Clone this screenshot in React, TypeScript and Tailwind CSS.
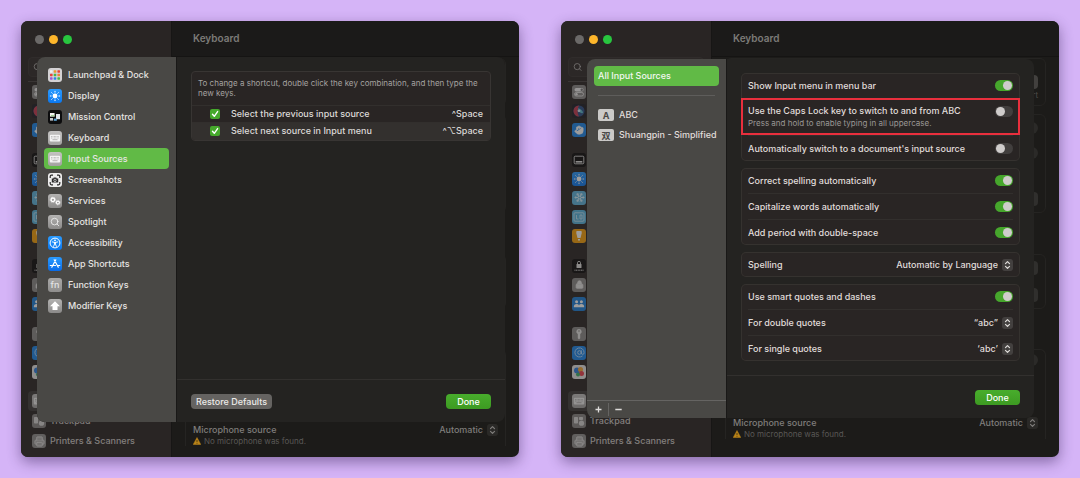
import React, { useState } from "react";
import {
    AtSign,
    Hand,
    Lock,
    Printer,
    Search,
    Snowflake,
} from "lucide-react";

type IconProps = { name: string };

const tiles: Record<string, string> = {
    launchpad: "bg-[#d4d2d4]",
    display: "bg-gradient-to-b from-[#2a9bff] to-[#0a78f0]",
    mission: "bg-[#0c0c0d]",
    keyboard: "bg-gradient-to-b from-[#c4c3c2] to-[#a3a2a1]",
    screenshots: "bg-[#ececec]",
    services: "bg-gradient-to-b from-[#b4b3b2] to-[#8b8a89]",
    spotlight: "bg-gradient-to-b from-[#b4b3b2] to-[#8b8a89]",
    accessibility: "bg-gradient-to-b from-[#2a9bff] to-[#0a78f0]",
    appstore: "bg-gradient-to-b from-[#2a9bff] to-[#0a6be8]",
    fn: "bg-gradient-to-b from-[#a9a8a7] to-[#8f8e8d]",
    modifier: "bg-gradient-to-b from-[#b4b3b2] to-[#8b8a89]",
    control: "bg-[#8b8a89]",
    siri: "bg-[#1e1e26]",
    hand: "bg-[#1c86ea]",
    dock: "bg-[#0c0c0d]",
    wallpaper: "bg-[#5cb4dd]",
    saver: "bg-[#55b3dc]",
    bulb: "bg-[#f3a00c]",
    lockscreen: "bg-[#0c0c0d]",
    privacy: "bg-[#8b8a89]",
    users: "bg-[#1c7fd9]",
    key: "bg-[#8b8a89]",
    at: "bg-[#1c86ea]",
    games: "bg-[#e4e4e4]",
    trackpad: "bg-[#8f8e8d]",
    printer: "bg-[#9a9998]",
};

const Glyph = ({ name }: IconProps) => {
    switch (name) {
        case "launchpad":
            return (
                <svg viewBox="0 0 14 14" className="size-[14px]">
                    <rect x="2" y="2.3" width="2.6" height="2.4" rx=".6" fill="#f2f2f2" />
                    <rect x="5.7" y="2.3" width="2.6" height="2.4" rx=".6" fill="#f39a2b" />
                    <rect x="9.4" y="2.3" width="2.6" height="2.4" rx=".6" fill="#e8453c" />
                    <rect x="2" y="5.8" width="2.6" height="2.4" rx=".6" fill="#e8453c" />
                    <rect x="5.7" y="5.8" width="2.6" height="2.4" rx=".6" fill="#46b84a" />
                    <rect x="9.4" y="5.8" width="2.6" height="2.4" rx=".6" fill="#f2803a" />
                    <rect x="2" y="9.3" width="2.6" height="2.4" rx=".6" fill="#a356d6" />
                    <rect x="5.7" y="9.3" width="2.6" height="2.4" rx=".6" fill="#2f86e8" />
                    <rect x="9.4" y="9.3" width="2.6" height="2.4" rx=".6" fill="#46b84a" />
                </svg>
            );
        case "display":
            return (
                <svg viewBox="0 0 14 14" className="size-[14px]" stroke="#fff" strokeWidth="1" strokeLinecap="round">
                    <circle cx="7" cy="7" r="2.4" fill="#fff" stroke="none" />
                    <path d="M7 2.3v.8M7 10.900v.8M2.300 7h.8M10.900 7h.8M3.700 3.700l.5.5M9.800 9.800l.5.5M3.700 10.300l.5-.5M9.800 4.200l.5-.5" />
                </svg>
            );
        case "mission":
            return (
                <svg viewBox="0 0 14 14" className="size-[14px]">
                    <rect x="2" y="3" width="4.6" height="3.6" fill="#f1f1f1" />
                    <rect x="8" y="4" width="4" height="5.2" fill="#dfe4ea" />
                    <rect x="2" y="8" width="3" height="2.6" fill="#c8ccd0" />
                    <rect x="5.8" y="8.6" width="3" height="2.2" fill="#5fa7d8" />
                    <rect x="3" y="5.2" width="3.6" height="1" fill="#8fca7d" />
                </svg>
            );
        case "screenshots":
            return (
                <svg viewBox="0 0 14 14" className="size-[14px]" fill="none" stroke="#2b2b2b" strokeWidth="1.2">
                    <path d="M2.2 5V3.4q0-1.2 1.2-1.2H5M9 2.2h1.6q1.2 0 1.2 1.2V5M11.8 9v1.6q0 1.2-1.2 1.2H9M5 11.8H3.4q-1.2 0-1.2-1.2V9" />
                    <path d="M3.8 5.5h1.4l.6-1h2.4l.6 1h1.4v4H3.8z" fill="#2b2b2b" stroke="none" />
                    <circle cx="7" cy="7.4" r="1.2" stroke="#ececec" strokeWidth=".7" />
                </svg>
            );
        case "services":
            return (
                <svg viewBox="0 0 14 14" className="size-[14px]" fill="none" stroke="#fff">
                    <circle cx="4.9" cy="5.8" r="1.8" strokeWidth="1.3" />
                    <circle cx="4.9" cy="5.8" r="2.7" strokeWidth=".7" strokeDasharray=".8 .9" />
                    <circle cx="9.9" cy="8.6" r="1.5" strokeWidth="1.2" />
                    <circle cx="9.9" cy="8.6" r="2.3" strokeWidth=".7" strokeDasharray=".8 .8" />
                </svg>
            );
        case "spotlight":
            return <Search size={10} color="#f0f0f0" strokeWidth={2} />;
        case "accessibility":
            return (
                <svg viewBox="0 0 14 14" className="size-[14px]" fill="none" stroke="#fff">
                    <circle cx="7" cy="7" r="4.9" strokeWidth="1" />
                    <circle cx="7" cy="4.3" r=".9" fill="#fff" stroke="none" />
                    <path d="M4.3 5.9l2 .5h1.4l2-.5M6.5 6.5v1.6l-.9 2.3M7.5 6.5v1.6l.9 2.3M7 6.4v1.8" strokeWidth=".9" strokeLinecap="round" />
                </svg>
            );
        case "appstore":
            return (
                <svg viewBox="0 0 14 14" className="size-[14px]" fill="none" stroke="#fff" strokeWidth="1.2" strokeLinecap="round">
                    <path d="M7.8 2.8L3.8 10.2M6.2 2.8L10.3 10.2M2.3 8.500h5.2M9.7 8.500h2" />
                </svg>
            );
        case "fn":
            return <span className="text-[9px] leading-none text-[#e4e4e4]">fn</span>;
        case "modifier":
            return (
                <svg viewBox="0 0 14 14" className="size-[14px]" fill="#fff">
                    <path d="M7 2.2L12 7.3H9.5V11H4.5V7.3H2z" />
                </svg>
            );
        case "control":
            return (
                <svg viewBox="0 0 14 14" className="size-[14px]">
                    <rect x="2.5" y="3" width="9" height="3.5" rx="1.75" fill="#eee" />
                    <circle cx="9.7" cy="4.75" r="1.2" fill="#777" />
                    <rect x="2.5" y="7.5" width="9" height="3.5" rx="1.75" fill="none" stroke="#eee" strokeWidth=".8" />
                    <circle cx="4.5" cy="9.25" r="1.2" fill="#eee" />
                </svg>
            );
        case "siri":
            return (
                <svg viewBox="0 0 14 14" className="size-[14px]">
                    <circle cx="7" cy="7" r="5.5" fill="#2c4f86" />
                    <path d="M7 1.5a5.5 5.5 0 0 0 0 11q-3-5 0-11z" fill="#c23a50" />
                    <path d="M6 4q5 2 5 5-4 1-5-5z" fill="#58b7c9" />
                    <circle cx="7" cy="6.8" r="1.4" fill="#d9e6f2" />
                </svg>
            );
        case "hand":
            return <Hand size={10} color="#fff" fill="#fff" strokeWidth={1.5} />;
        case "dock":
            return (
                <svg viewBox="0 0 14 14" className="size-[14px]">
                    <rect x="2.2" y="3.2" width="9.6" height="7.6" rx="1" fill="none" stroke="#ddd" strokeWidth=".9" />
                    <rect x="3.7" y="8" width="6.6" height="1.6" fill="#ddd" />
                </svg>
            );
        case "wallpaper":
            return <Snowflake size={11} color="#d8f0fb" strokeWidth={2} />;
        case "saver":
            return (
                <svg viewBox="0 0 14 14" className="size-[14px]" fill="none" stroke="#cdeaf7" strokeWidth=".8">
                    <rect x="2" y="2.8" width="10" height="8.4" rx="1" />
                    <path d="M4.5 5v4h2M8 5h2v4H8z" />
                </svg>
            );
        case "bulb":
            return (
                <svg viewBox="0 0 14 14" className="size-[14px]" fill="#fff">
                    <path d="M4.500 2h5q.8 2.500-.3 4.200L8.500 9h-3L4.800 6.200Q3.700 4.500 4.500 2z" />
                    <path d="M6 10h2v1.500H6z" />
                </svg>
            );
        case "lockscreen":
            return (
                <svg viewBox="0 0 14 14" className="size-[14px]">
                    <rect x="4.5" y="5" width="5" height="4" rx=".6" fill="#ddd" />
                    <path d="M5.5 5V3.7q0-1.3 1.5-1.3t1.5 1.3V5" fill="none" stroke="#ddd" strokeWidth=".9" />
                    <path d="M2.5 11.2h9" stroke="#ddd" strokeWidth="1" strokeDasharray="1 .6" />
                </svg>
            );
        case "privacy":
            return <Lock size={9} color="#e4e4e4" fill="#e4e4e4" strokeWidth={2} />;
        case "users":
            return (
                <svg viewBox="0 0 14 14" className="size-[14px]" fill="#fff">
                    <circle cx="4.6" cy="4.8" r="1.5" />
                    <circle cx="9.4" cy="4.8" r="1.5" />
                    <path d="M1.8 10.2q0-3.200 2.800-3.200 2.100 0 2.400 1.400Q7.300 7 9.400 7q2.800 0 2.800 3.200z" />
                </svg>
            );
        case "key":
            return (
                <svg viewBox="0 0 14 14" className="size-[14px]" fill="#e4e4e4">
                    <path d="M7 2a2.700 2.700 0 0 1 1.200 5.100v4.200L7 12.400l-1.200-1.100V7.100A2.700 2.700 0 0 1 7 2z" />
                    <circle cx="7" cy="4" r=".8" fill="#8b8a89" />
                </svg>
            );
        case "at":
            return <AtSign size={11} color="#b5dbff" strokeWidth={2} />;
        case "games":
            return (
                <svg viewBox="0 0 14 14" className="size-[14px]">
                    <circle cx="5" cy="5.5" r="3" fill="#2f7fe0" />
                    <circle cx="8.5" cy="4.5" r="2.5" fill="#f2a63a" />
                    <circle cx="9.5" cy="8.5" r="2.5" fill="#e8404e" />
                    <circle cx="6" cy="9.5" r="2" fill="#3db06a" />
                </svg>
            );
        case "trackpad":
            return (
                <svg viewBox="0 0 14 14" className="size-[14px]" fill="#e4e4e4">
                    <rect x="2" y="3" width="4" height="6.5" rx=".8" />
                    <rect x="7" y="3" width="4" height="3" rx=".8" />
                    <circle cx="9.5" cy="9.2" r="2.6" />
                </svg>
            );
        case "printer":
            return <Printer size={11} color="#ececec" fill="#bdbcbb" strokeWidth={2} />;
        default:
            return (
                <svg viewBox="0 0 14 14" className="size-[14px]">
                    <rect x="1.8" y="3.8" width="10.4" height="6.6" rx="1" fill="#f4f4f4" />
                    <path d="M3.2 5.5h7.6M3.2 7h7.6" stroke="#9b9a99" strokeWidth=".7" strokeDasharray=".8 .6" />
                    <path d="M4.5 8.7h5" stroke="#9b9a99" strokeWidth=".7" />
                </svg>
            );
    }
};

const AppIcon = ({ name }: IconProps) => (
    <span className={`flex size-[14px] shrink-0 items-center justify-center overflow-hidden rounded-[3px] ${tiles[name]}`}>
        <Glyph name={name} />
    </span>
);

const backGroups = [
    ["control", "siri", "hand"],
    ["dock", "display", "wallpaper", "saver", "bulb"],
    ["lockscreen", "privacy", "users"],
    ["key", "at", "games"],
];

const Chevrons = () => (
    <svg viewBox="0 0 11 12" className="pointer-events-none absolute right-0 h-3 w-[11px]" fill="none" strokeLinecap="round" strokeLinejoin="round">
        <rect width="11" height="12" rx="3" fill="currentColor" fillOpacity=".15" />
        <path d="M3.5 4.6l2-2 2 2M3.5 7.4l2 2 2-2" stroke="currentColor" strokeWidth="1.2" />
    </svg>
);

const PopUp = ({ id, label, value }: { id?: string; label?: string; value: string }) => (
    <span className="relative flex items-center pr-px">
        <select id={id} aria-label={label} className="field-sizing-content appearance-none bg-transparent pr-[14px] text-right outline-none">
            <option>{value}</option>
        </select>
        <Chevrons />
    </span>
);

const Toggle = ({ id, on }: { id: string; on?: boolean }) => (
    <input
        id={id}
        type="checkbox"
        role="switch"
        defaultChecked={on}
        className="flex h-[11px] w-[18px] shrink-0 appearance-none items-center rounded-full bg-[#423f3e] px-px before:size-[9px] before:rounded-full before:bg-[#cfcccb] before:content-[''] checked:justify-end checked:bg-[#46a62c]"
    />
);

const DoneButton = () => (
    <button className="h-[15px] w-[45px] rounded-[4px] bg-gradient-to-b from-[#48ad2c] to-[#3d9a22] text-[9px] leading-[15px] font-medium text-white">
        Done
    </button>
);

// settings cards of the window itself, mostly hidden by the open sheet
const BackPane = ({ scrolled }: { scrolled: boolean }) => (
    <div className={`flex min-h-0 flex-1 flex-col px-[13px] pt-px text-[#7f7d7b] ${scrolled ? "pb-[18px]" : "pb-[11px]"}`}>
        <div className="flex h-12 shrink-0 flex-col items-end justify-end rounded-md border border-[#252422] px-[7px] pb-1">
            <span className="h-[14px] w-2 rounded-sm bg-[#42403e]"></span>
            <span className="text-[8px] leading-3 text-[#4e4c4a]">Short</span>
        </div>
        <div className="mt-2 flex h-[99px] shrink-0 flex-col items-end gap-[13px] rounded-md border border-[#252422] px-[7px] pt-[7px]">
            <span className="h-3 w-5 rounded-full bg-[#2b2a28]"></span>
            <span className="h-3 w-5 rounded-full bg-[#2b2a28]"></span>
            <span className="mt-5 h-[14px] w-10 rounded-sm bg-[#302f2d]"></span>
        </div>
        <div className="mt-[41px] flex h-[55px] shrink-0 flex-col items-end justify-around rounded-md border border-[#252422] px-[7px]">
            <span className="h-[14px] w-10 rounded-sm bg-[#302f2d]"></span>
            <span className="h-[14px] w-10 rounded-sm bg-[#302f2d]"></span>
        </div>
        <div className="mt-10 flex flex-1 flex-col justify-between rounded-t-md border border-b-0 border-[#252422] px-[7px] pt-1">
            <span className="h-3 w-5 self-end rounded-full bg-[#2b2a28]"></span>
            <div className="flex items-start justify-between text-[9px] leading-3 font-medium">
                <div>
                    <p>Microphone source</p>
                    <p className="flex items-center gap-[3px] text-[8px] leading-[10px] font-normal text-[#5a5856]">
                        <svg viewBox="0 0 8 8" className="size-2">
                            <path d="M4 .5L7.8 7.5H.2z" fill="#b98318" stroke="#b98318" strokeWidth=".5" strokeLinejoin="round" />
                            <path d="M4 3v2.2M4 6v.7" stroke="#3a2c10" strokeWidth=".8" />
                        </svg>
                        No microphone was found.
                    </p>
                </div>
                <PopUp label="Microphone source" value="Automatic" />
            </div>
        </div>
    </div>
);

const SettingsWindow = ({ scrolled = false, children }: { scrolled?: boolean; children: React.ReactNode }) => (
    <section className="relative grid grid-cols-[150px_minmax(0,1fr)] overflow-hidden rounded-[7px] bg-[#1c1b19] shadow-[0_5px_14px_rgba(40,20,70,0.45)]">
        <nav className="flex flex-col bg-[#292524] px-[7px] pb-[6px]">
            <div className="flex h-9 items-center gap-[5px] pl-[7px]">
                <button aria-label="Close" className="size-[9px] rounded-full bg-[#6b6968]"></button>
                <button aria-label="Minimize" className="size-[9px] rounded-full bg-[#fdb62b]"></button>
                <button aria-label="Zoom" className="size-[9px] rounded-full bg-[#28c63f]"></button>
            </div>
            <label className="flex h-5 items-center rounded-[4px] border border-[#302c2b] bg-[#2c2827] pl-1">
                <Search size={10} color="#7b7877" strokeWidth={2} />
                <input type="search" aria-label="Search" className="w-full bg-transparent text-[9px] outline-none" />
            </label>
            <div className="mt-1 border-t border-[#393534]"></div>
            {backGroups.map((group, i) => (
                <ul key={i} className="mb-[11px] opacity-55">
                    {group.map((name) => (
                        <li key={name} className="flex h-[19px] items-center pl-1">
                            <AppIcon name={name} />
                        </li>
                    ))}
                </ul>
            ))}
            <ul className="-mt-px text-[9px] font-medium text-[#d9d6d4]">
                {[
                    ["keyboard", "Keyboard"],
                    ["trackpad", "Trackpad"],
                    ["printer", "Printers & Scanners"],
                ].map(([name, label]) => (
                    <li key={name} className={`flex h-5 items-center rounded-[4px] pl-1 ${name === "keyboard" ? "bg-[#343130]" : ""}`}>
                        <span className="flex items-center gap-1 opacity-50">
                            <AppIcon name={name} />
                            {label}
                        </span>
                    </li>
                ))}
            </ul>
        </nav>
        <div className="flex min-h-0 flex-col border-l border-[#171615]">
            <h2 className="flex h-9 shrink-0 items-center border-b border-[#151413] bg-[#1b1a19] pl-[21px] text-[10px] font-semibold text-[#7c7a78]">
                Keyboard
            </h2>
            <BackPane scrolled={scrolled} />
        </div>
        {children}
    </section>
);

const shortcutGroups = [
    ["launchpad", "Launchpad & Dock"],
    ["display", "Display"],
    ["mission", "Mission Control"],
    ["keyboard", "Keyboard"],
    ["input", "Input Sources"],
    ["screenshots", "Screenshots"],
    ["services", "Services"],
    ["spotlight", "Spotlight"],
    ["accessibility", "Accessibility"],
    ["appstore", "App Shortcuts"],
    ["fn", "Function Keys"],
    ["modifier", "Modifier Keys"],
];

const ShortcutRow = ({ id, label, keys }: { id: string; label: string; keys: string }) => (
    <tr className="h-[17px] border-t border-[#322f2d] even:bg-[#33302e]">
        <td className="w-[39px] pl-[18px]">
            <span className="relative flex size-[10px]">
                <input id={id} type="checkbox" defaultChecked className="peer size-[10px] appearance-none rounded-[2px] bg-[#5a5755] checked:bg-[#45a92b]" />
                <svg viewBox="0 0 10 10" className="pointer-events-none absolute inset-0 hidden size-[10px] peer-checked:block">
                    <path d="M2.5 5.3l1.8 2L7.6 2.6" fill="none" stroke="#fff" strokeWidth="1.4" strokeLinecap="round" strokeLinejoin="round" />
                </svg>
            </span>
        </td>
        <td className="leading-4"><label htmlFor={id}>{label}</label></td>
        <td className="pr-[7px] text-right leading-4">{keys}</td>
    </tr>
);

const ShortcutsSheet = () => {
    const [selected, setSelected] = useState<string>("input");

    return (
        <div className="absolute top-9 right-[14px] bottom-[35px] left-4 flex overflow-hidden rounded-lg bg-[#242321]">
            <div className="flex w-[140px] shrink-0 flex-col border-r border-[#191817] bg-[#494845] px-[7px] pt-[7px]">
                {shortcutGroups.map(([name, label]) => (
                    <button
                        key={name}
                        onClick={() => setSelected(name)}
                        className={`flex h-[21px] items-center gap-[6px] rounded-[4px] pl-1 text-[9px] font-medium text-[#e6e4e2] ${selected === name ? "bg-[#61ba46]" : ""}`}
                    >
                        <AppIcon name={name === "input" ? "keyboard" : name} />
                        {label}
                    </button>
                ))}
            </div>
            <div className="flex min-w-0 flex-1 flex-col">
                <div className="flex-1 px-[14px] pt-[14px]">
                    <div className="overflow-hidden rounded-[4px] border border-[#383533] bg-[#292524]">
                        <p className="px-[6px] pt-[6px] pb-[7px] text-[8px] leading-[10px] text-[#a5a2a0]">
                            To change a shortcut, double click the key combination, and then type the new keys.
                        </p>
                        <table className="w-full text-[9px] font-medium text-[#dddad8]">
                            <tbody>
                                <ShortcutRow id="prev" label="Select the previous input source" keys="^Space" />
                                <ShortcutRow id="next" label="Select next source in Input menu" keys="^⌥Space" />
                            </tbody>
                        </table>
                    </div>
                </div>
                <div className="flex h-[43px] items-center justify-between border-t border-[#32302e] px-[14px]">
                    <button className="h-[15px] rounded-[4px] bg-[#656361] px-[5px] text-[9px] leading-[15px] font-medium text-[#eceae8]">
                        Restore Defaults
                    </button>
                    <DoneButton />
                </div>
            </div>
        </div>
    );
};

const Card = ({ children }: { children: React.ReactNode }) => (
    <div className="rounded-[5px] bg-[#292524] inset-ring inset-ring-[#35322f]">{children}</div>
);

const Row = ({ id, label, children }: { id: string; label: string; children: React.ReactNode }) => (
    <div className="mx-[7px] flex h-[26px] items-center justify-between border-t border-[#322f2d] first:h-[25px] first:border-t-0">
        <label htmlFor={id}>{label}</label>
        {children}
    </div>
);

const SourceBadge = ({ children }: { children: React.ReactNode }) => (
    <span className="flex h-3 w-4 shrink-0 items-center justify-center rounded-[2px] bg-[#cbcac8] text-[9px] leading-none font-bold text-[#4a4947]">
        {children}
    </span>
);

const InputSourcesSheet = () => (
    <div className="absolute top-[38px] right-[25px] bottom-[39px] left-[26px] flex overflow-hidden rounded-lg bg-[#242321] text-[9px] font-medium text-[#e0dddb]">
        <div className="flex w-[140px] shrink-0 flex-col border-r border-[#191817] bg-[#494845]">
            <div className="flex flex-1 flex-col px-[7px] pt-[7px]">
                <button className="h-5 rounded-[4px] bg-[#61ba46] pl-1 text-left text-[#f2f7f0]">All Input Sources</button>
                <hr className="mx-1 mt-[9px] border-[#5e5d5b]" />
                <button className="mt-[9px] flex h-5 items-center gap-[5px] pl-1">
                    <SourceBadge>A</SourceBadge>
                    ABC
                </button>
                <button className="flex h-5 items-center gap-[5px] pl-1 whitespace-nowrap">
                    <SourceBadge>双</SourceBadge>
                    Shuangpin - Simplified
                </button>
            </div>
            <div className="flex h-[18px] items-center border-t border-[#656462] pl-[7px]">
                <button aria-label="Add" className="flex h-[13px] w-[15px] items-center justify-start border-r border-[#656462] pl-px">
                    <svg viewBox="0 0 7 7" className="size-[7px]" stroke="#dedcda" strokeWidth="1.3"><path d="M3.5 .5v6M.5 3.5h6" /></svg>
                </button>
                <button aria-label="Remove" className="flex h-[13px] w-[18px] items-center justify-center">
                    <svg viewBox="0 0 7 7" className="size-[7px]" stroke="#dedcda" strokeWidth="1.3"><path d="M.3 3.5h6.400" /></svg>
                </button>
            </div>
        </div>
        <div className="flex min-w-0 flex-1 flex-col">
            <div className="flex flex-1 flex-col gap-[7px] px-[14px] pt-[14px]">
                <Card>
                    <Row id="menu" label="Show Input menu in menu bar"><Toggle id="menu" on /></Row>
                    <div className="flex h-[37px] items-start justify-between border-2 border-[#e92f3d] px-[5px] pt-1">
                        <label htmlFor="caps" className="leading-[14px]">
                            Use the Caps Lock key to switch to and from ABC
                            <span className="block text-[8px] leading-[10px] font-normal text-[#9a9795]">Press and hold to enable typing in all uppercase.</span>
                        </label>
                        <span className="flex h-[14px] items-center"><Toggle id="caps" /></span>
                    </div>
                    <Row id="doc" label="Automatically switch to a document's input source"><Toggle id="doc" /></Row>
                </Card>
                <Card>
                    <Row id="correct" label="Correct spelling automatically"><Toggle id="correct" on /></Row>
                    <Row id="capital" label="Capitalize words automatically"><Toggle id="capital" on /></Row>
                    <Row id="period" label="Add period with double-space"><Toggle id="period" on /></Row>
                </Card>
                <Card>
                    <Row id="spelling" label="Spelling"><PopUp id="spelling" value="Automatic by Language" /></Row>
                </Card>
                <Card>
                    <Row id="smart" label="Use smart quotes and dashes"><Toggle id="smart" on /></Row>
                    <Row id="double" label="For double quotes"><PopUp id="double" value="“abc”" /></Row>
                    <Row id="single" label="For single quotes"><PopUp id="single" value="‘abc’" /></Row>
                </Card>
            </div>
            <div className="flex h-[43px] items-center justify-end border-t border-[#32302e] px-[14px]">
                <DoneButton />
            </div>
        </div>
    </div>
);

export default function App() {
    return (
        <main className="grid min-h-screen grid-cols-2 content-start gap-[42px] bg-[#d5b4f7] px-[21px] py-[21px] font-['Inter','Noto_Sans_CJK_SC',sans-serif]">
            <SettingsWindow>
                <ShortcutsSheet />
            </SettingsWindow>
            <SettingsWindow scrolled>
                <InputSourcesSheet />
            </SettingsWindow>
        </main>
    );
}
